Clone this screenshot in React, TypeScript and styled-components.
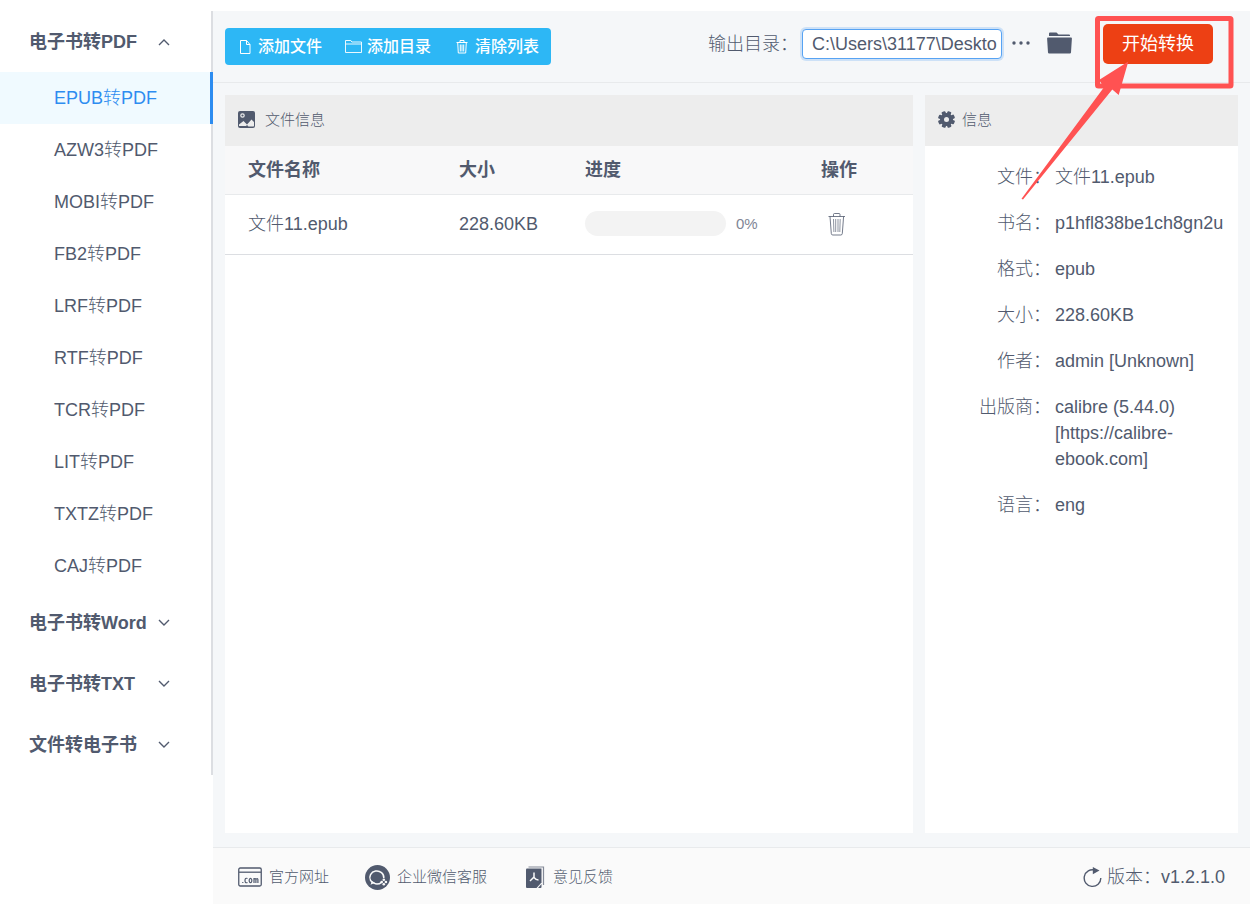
import React, { useState } from "react";
import styled, { createGlobalStyle } from "styled-components";

const ink = "#515a6e";
const line = "#e8eaec";
const blue = "#2d8cf0";

const GlobalStyle = createGlobalStyle`
  *, *::before, *::after { box-sizing: border-box; }
  body {
    margin: 0;
    background: #fff;
    color: ${ink};
    font-family: "Liberation Sans", Arial, "Noto Sans CJK SC", sans-serif;
    font-size: 18px;
    font-weight: 300;
    line-height: 26px;
  }
  button, input {
    font: inherit;
    color: inherit;
  }
  button {
    border: 0;
    padding: 0;
    background: none;
    cursor: pointer;
  }
  a { color: inherit; text-decoration: none; }
  svg { display: block; flex: none; }
`;

const Page = styled.div`
  position: relative;
  display: flex;
  min-height: 100vh;
  padding-top: 11px;
`;

const Sidebar = styled.nav`
  flex: none;
  align-self: flex-start;
  width: 213px;
  box-shadow: inset -2px 0 #dcdee2;
`;

const GroupButton = styled.button`
  display: flex;
  align-items: center;
  justify-content: space-between;
  width: 100%;
  height: 61px;
  padding: 0 43px 0 29px;
  font-weight: 700;
`;

const SubLink = styled.a<{ $active: boolean }>`
  display: flex;
  align-items: center;
  height: 52px;
  padding-left: 54px;
  color: ${(p) => (p.$active ? blue : ink)};
  background: ${(p) => (p.$active ? "#f0faff" : "transparent")};
  border-right: 3px solid ${(p) => (p.$active ? blue : "transparent")};
`;

const Main = styled.main`
  flex: 1;
  min-width: 0;
  display: flex;
  flex-direction: column;
  background: #f5f7f9;
`;

const Toolbar = styled.header`
  display: flex;
  align-items: center;
  justify-content: space-between;
  height: 72px;
  padding: 0 37px 0 12px;
  border-bottom: 1px solid ${line};
`;

const ActionGroup = styled.div`
  display: flex;
  align-items: center;
  gap: 23px;
  height: 37px;
  padding: 0 12px;
  border-radius: 4px;
  background: #2db7f5;
  color: #fff;
`;

const ActionButton = styled.button`
  display: flex;
  align-items: center;
  gap: 5px;
  font-size: 16px;
  font-weight: 500;
`;

const OutputArea = styled.div`
  display: flex;
  align-items: center;
  padding-bottom: 5px;
`;

const PathInput = styled.input`
  width: 200px;
  height: 30px;
  margin: 0 10px 0 4px;
  padding: 0 4px 0 9px;
  border: 1px solid #57a3f3;
  border-radius: 4px;
  background: #fff;
  outline: none;
  box-shadow: 0 0 0 2px rgba(45, 140, 240, 0.2);
`;

const IconButton = styled.button`
  display: flex;
  margin-right: 17px;
`;

const StartButton = styled.button`
  width: 110px;
  height: 40px;
  margin-left: 14px;
  border-radius: 5px;
  background: #ed4014;
  color: #fff;
  font-weight: 400;
`;

const Content = styled.div`
  flex: 1;
  display: grid;
  grid-template-columns: minmax(0, 1fr) 313px;
  gap: 12px;
  padding: 12px 12px 14px;
`;

const Panel = styled.section`
  background: #fff;
`;

const PanelTitle = styled.h2<{ $gap: number }>`
  display: flex;
  align-items: center;
  gap: ${(p) => p.$gap}px;
  height: 51px;
  margin: 0;
  padding: 0 13px 2px;
  background: #ededed;
  font-size: 15px;
  font-weight: 300;
`;

const FileTable = styled.table`
  width: 100%;
  table-layout: fixed;
  border-collapse: separate;
  border-spacing: 0;
  text-align: left;
  th, td { padding: 0 0 0 23px; }
  th {
    height: 49px;
    background: #f8f8f9;
    border-bottom: 1px solid ${line};
    font-weight: 700;
  }
  td {
    height: 60px;
    padding-bottom: 2px;
    border-bottom: 1px solid #dcdee2;
  }
`;

const Progress = styled.div`
  display: flex;
  align-items: center;
  gap: 10px;
  color: #808695;
  font-size: 15px;
`;

const Track = styled.div`
  width: 141px;
  height: 25px;
  border-radius: 13px;
  background: #f3f3f3;
  overflow: hidden;
`;

const Fill = styled.div`
  height: 100%;
  background: ${blue};
`;

const RowAction = styled.button`
  display: flex;
  margin-left: 7px;
`;

const Details = styled.dl`
  display: flex;
  flex-direction: column;
  gap: 20px;
  margin: 0;
  padding: 18px 20px 18px 0;
`;

const Detail = styled.div`
  display: flex;
  gap: 4px;
  dt { flex: none; width: 126px; text-align: right; }
  dd { flex: 1; min-width: 0; margin: 0; }
`;

const Footer = styled.footer`
  display: flex;
  align-items: center;
  gap: 36px;
  height: 57px;
  padding: 2px 25px 0;
  border-top: 1px solid ${line};
  background: #fafafa;
`;

const FooterLink = styled.a`
  display: flex;
  align-items: center;
  gap: 7px;
  font-size: 15px;
`;

const Version = styled.div`
  display: flex;
  align-items: center;
  gap: 5px;
  margin-left: auto;
`;

const Annotation = styled.svg`
  position: absolute;
  top: 0;
  right: 0;
  pointer-events: none;
`;

const Chevron = ({ open }: { open: boolean }) => (
  <svg width="12" height="12" viewBox="0 0 12 12" fill="none" stroke={ink} strokeWidth="1.4">
    <path d={open ? "M1 9l5-5 5 5" : "M1 3l5 5 5-5"} />
  </svg>
);

const DocIcon = () => (
  <svg width="16" height="16" viewBox="0 0 16 16" fill="none" stroke="#fff" strokeWidth="1">
    <path d="M3.5 1.5h6l3.5 4v9H3.5zM9.5 1.5v4H13" />
  </svg>
);

const FolderLineIcon = () => (
  <svg width="17" height="16" viewBox="0 0 17 16" fill="none" stroke="#fff" strokeWidth="1">
    <path d="M.5 13.5v-12h5.3l1 1.500h9.700v10.500zM.5 5h16" strokeOpacity=".9" />
  </svg>
);

const BinIcon = () => (
  <svg width="16" height="16" viewBox="-1 0 16 16" fill="none" stroke="#fff" strokeWidth="1">
    <path d="M1.500 3.500h11M5 3.500v-2h4v2M2.700 3.500l.6 10.500h7.400l.6-10.500M5.300 5.500v7M7 5.500v7M8.700 5.500v7" />
  </svg>
);

const TrashIcon = () => (
  <svg width="18" height="24" viewBox="0 0 18 24" fill="none" stroke={ink} strokeWidth="1">
    <path d="M.5 4.500h16.500M5.500 4.500v-2q0-1 1-1h4.500q1 0 1 1v2M2 4.500l1.300 17q.1 1.500 1.500 1.500h8q1.400 0 1.500-1.500l1.300-17" strokeOpacity=".8" />
    <path d="M5.500 7l.4 13M7.700 7v13M10 7v13M12.200 7l-.4 13" strokeOpacity=".65" />
  </svg>
);

const DotsIcon = () => (
  <svg width="18" height="8" viewBox="0 0 18 8" fill={ink}>
    <circle cx="2" cy="3" r="1.700" />
    <circle cx="9" cy="3" r="1.700" />
    <circle cx="16" cy="3" r="1.700" />
  </svg>
);

const FolderIcon = () => (
  <svg width="25" height="24" viewBox="0 0 25 24" fill={ink}>
    <path d="M2 4V1.500Q2 .5 3 .5h6.500L11.500 2.500H22q1 0 1 1V4z" />
    <path d="M1 5.500h23q1 0 .9 1l-.9 14q-.1 1-1.100 1H2.100q-1 0-1.100-1L.1 6.500q-.1-1 .9-1z" />
  </svg>
);

const PictureIcon = () => (
  <svg width="17" height="17" viewBox="0 0 17 17">
    <rect width="17" height="17" rx="2" fill={ink} />
    <circle cx="4.500" cy="4.500" r="1.700" fill="none" stroke="#ededed" strokeWidth="1.200" />
    <path d="M1 15v-1.500l4.500-3.500 3.500 3.500 4.500-5 2.500 2.500v4l-.5.500h-5l-1.500-1.500-1 1H1.500z" fill="#ededed" />
  </svg>
);

const GearIcon = () => (
  <svg width="17" height="17" viewBox="0 0 17 17">
    <g fill={ink}>
      <circle cx="8.500" cy="8.500" r="6.500" />
      {[22, 67, 112, 157].map((a) => (
        <rect key={a} x="6.500" y="0" width="4" height="17" rx="1" transform={`rotate(${a} 8.500 8.500)`} />
      ))}
    </g>
    <circle cx="8.500" cy="8.500" r="2.500" fill="#ededed" />
  </svg>
);

const SiteIcon = () => (
  <svg width="24" height="20" viewBox="0 0 24 20" fill="none" stroke={ink}>
    <rect x=".75" y="1" width="22.500" height="18" rx="1.500" strokeWidth="1.300" />
    <path d="M1 5.200h22" strokeWidth="1.300" />
    <path d="M4.200 15.500h1.200M9.500 11.500q-2.500-1-2.500 2t2.500 2M12.500 11.300a1.300 2.200 0 1 0 .01 0zM16 16v-5M16 12.500q1.700-2 1.900 0V16M17.900 12.500q1.800-2 2 0V16" strokeWidth="1.200" />
  </svg>
);

const ServiceIcon = () => (
  <svg width="25" height="25" viewBox="0 0 25 25">
    <circle cx="12.500" cy="12.500" r="12.500" fill={ink} />
    <path d="M16.500 17.300A7 6.500 0 1 1 18.800 13" fill="none" stroke="#fafafa" strokeWidth="1.500" />
    <path d="M7 16l-1.500 3.800 4.500-2z" fill="#fafafa" />
    <g fill="#fafafa">
      <circle cx="18.800" cy="14.800" r="1.300" />
      <circle cx="16.700" cy="17" r="1.300" />
      <circle cx="20.900" cy="17" r="1.300" />
      <circle cx="18.800" cy="19.200" r="1.300" />
    </g>
  </svg>
);

const FeedbackIcon = () => (
  <svg width="23" height="23" viewBox="-3 0 23 23">
    <path d="M2.500 1h15v18" fill="none" stroke={ink} strokeOpacity=".7" strokeWidth="1.200" />
    <path d="M1 2.500h14.500v14l-5 5.500H1q-1 0-1-1V3.500q0-1 1-1z" fill={ink} />
    <path d="M15.500 18v3q0 1-1 1h-2.500z" fill={ink} />
    <path d="M8 6.500v5M8 11l-4 4M8 11.500q2 2.500 4.500 2.500" fill="none" stroke="#fafafa" strokeWidth="1.500" />
  </svg>
);

const RefreshIcon = () => (
  <svg width="19" height="22" viewBox="0 0 19 22">
    <path d="M12 4.200A8.300 8.300 0 1 0 17.800 12" fill="none" stroke={ink} strokeWidth="1.400" />
    <path d="M9.800 1l6.700 3.500-6.700 3.700z" fill={ink} />
  </svg>
);

const groups = [
  {
    title: "电子书转PDF",
    items: ["EPUB", "AZW3", "MOBI", "FB2", "LRF", "RTF", "TCR", "LIT", "TXTZ", "CAJ"].map((f) => `${f}转PDF`),
  },
  { title: "电子书转Word", items: [] },
  { title: "电子书转TXT", items: [] },
  { title: "文件转电子书", items: [] },
];

const files = [{ name: "文件11.epub", size: "228.60KB", progress: 0 }];

const details = [
  ["文件", "文件11.epub"],
  ["书名", "p1hfl838be1ch8gn2u"],
  ["格式", "epub"],
  ["大小", "228.60KB"],
  ["作者", "admin [Unknown]"],
  ["出版商", "calibre (5.44.0) [https://calibre-ebook.com]"],
  ["语言", "eng"],
];

export default function App() {
  const [path, setPath] = useState("C:\\Users\\31177\\Deskto");
  return (
    <Page lang="zh-CN">
      <GlobalStyle />
      <Sidebar>
        {groups.map((group, index) => (
          <div key={group.title}>
            <GroupButton aria-expanded={index === 0}>
              {group.title}
              <Chevron open={index === 0} />
            </GroupButton>
            {group.items.map((item, i) => (
              <SubLink key={item} href="#" $active={i === 0}>
                {item}
              </SubLink>
            ))}
          </div>
        ))}
      </Sidebar>
      <Main>
        <Toolbar>
          <ActionGroup>
            <ActionButton><DocIcon />添加文件</ActionButton>
            <ActionButton><FolderLineIcon />添加目录</ActionButton>
            <ActionButton><BinIcon />清除列表</ActionButton>
          </ActionGroup>
          <OutputArea>
            <label htmlFor="output">输出目录：</label>
            <PathInput id="output" value={path} onChange={(e) => setPath(e.target.value)} />
            <IconButton aria-label="选择目录"><DotsIcon /></IconButton>
            <IconButton aria-label="打开目录"><FolderIcon /></IconButton>
            <StartButton>开始转换</StartButton>
          </OutputArea>
        </Toolbar>
        <Content>
          <Panel>
            <PanelTitle $gap={10}><PictureIcon />文件信息</PanelTitle>
            <FileTable>
              <colgroup>
                <col />
                <col width="126" />
                <col width="236" />
                <col width="115" />
              </colgroup>
              <thead>
                <tr><th>文件名称</th><th>大小</th><th>进度</th><th>操作</th></tr>
              </thead>
              <tbody>
                {files.map((file) => (
                  <tr key={file.name}>
                    <td>{file.name}</td>
                    <td>{file.size}</td>
                    <td>
                      <Progress>
                        <Track><Fill style={{ width: `${file.progress}%` }} /></Track>
                        {file.progress}%
                      </Progress>
                    </td>
                    <td><RowAction aria-label="删除"><TrashIcon /></RowAction></td>
                  </tr>
                ))}
              </tbody>
            </FileTable>
          </Panel>
          <Panel>
            <PanelTitle $gap={7}><GearIcon />信息</PanelTitle>
            <Details>
              {details.map(([label, value]) => (
                <Detail key={label}><dt>{label}：</dt><dd>{value}</dd></Detail>
              ))}
            </Details>
          </Panel>
        </Content>
        <Footer>
          <FooterLink href="#"><SiteIcon />官方网址</FooterLink>
          <FooterLink href="#"><ServiceIcon />企业微信客服</FooterLink>
          <FooterLink href="#"><FeedbackIcon />意见反馈</FooterLink>
          <Version><RefreshIcon />版本：v1.2.1.0</Version>
        </Footer>
      </Main>
      <Annotation width="240" height="210" viewBox="1010 0 240 210" aria-hidden="true">
        <rect x="1097.500" y="18.500" width="133.500" height="67.500" rx="1" fill="none" stroke="#ff5252" strokeWidth="5" />
        <path d="M1128.300 61.500L1099 80l5 7.300-82.500 111.500 1.500.7 89.300-110 6.400 5.500z" fill="#ff5252" />
      </Annotation>
    </Page>
  );
}
